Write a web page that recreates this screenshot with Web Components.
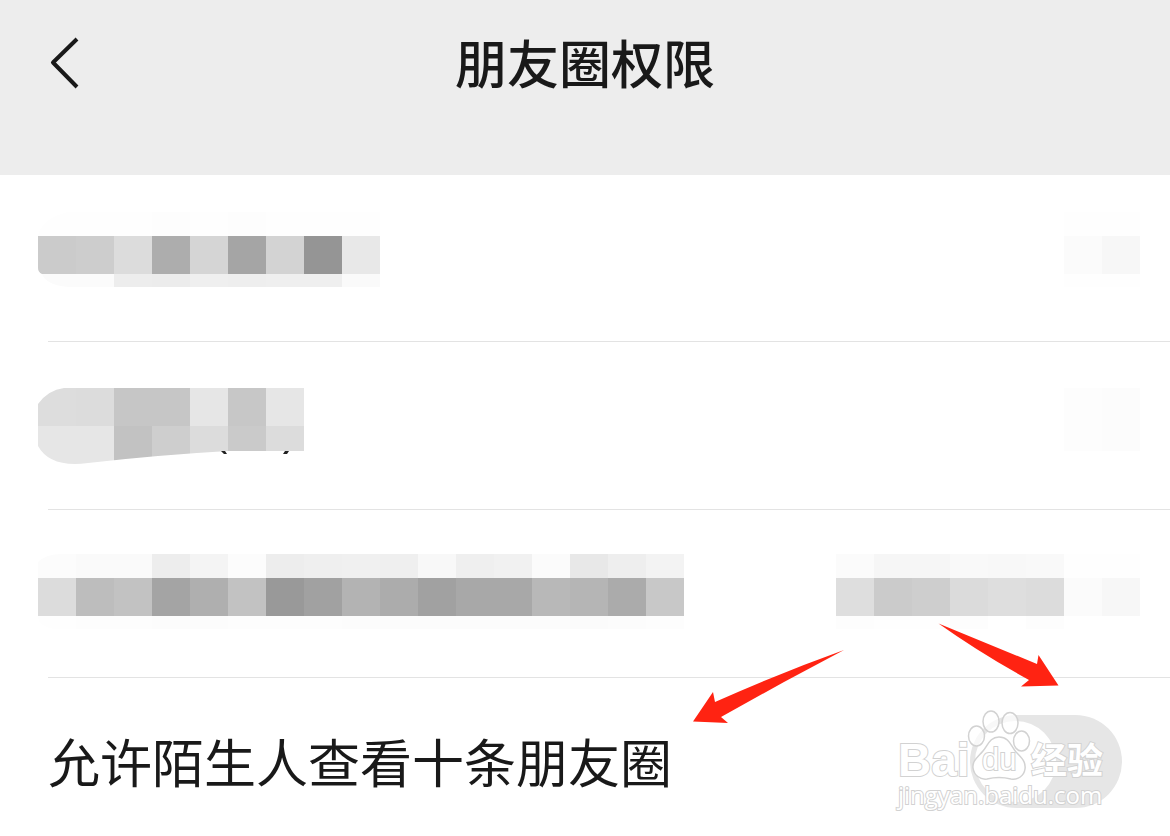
<!DOCTYPE html>
<html lang="zh-CN">
<head>
<meta charset="utf-8">
<meta name="viewport" content="width=device-width, initial-scale=1">
<title>朋友圈权限</title>
<style>
  body { margin: 0; background: #fff; color: #191919; font-family: "Liberation Sans", "Noto Sans CJK SC", sans-serif; }
</style>
</head>
<body>
<privacy-page>
  <nav-header slot="header">朋友圈权限</nav-header>
  <setting-row>
    <pixel-mosaic heights="24 38 13" corner="M30 0H342V75H30Q8 73 4 62Q0 60 0 56V24Q4 6 30 0Z"
      tiles="fe fe fe fd fe fd fe fe fe/cb cd dc ad d5 a5 d3 95 e8/fb fb ed ec ef ee ef ef fa"></pixel-mosaic>
    <pixel-mosaic slot="end" heights="24 38 13" tiles="fe fe/fb f7/fe fe"></pixel-mosaic>
  </setting-row>
  <setting-row>
    <pixel-mosaic heights="9 38 38" corner="M0 25Q10 11 26 9H266V72H190Q120 76 50 84Q12 89 0 67Z" specks
      tiles="ff ff ff ff ff ff ff/dd dc c6 c6 e6 c7 e6/e6 e6 c2 ce dc ca dc"></pixel-mosaic>
    <pixel-mosaic slot="end" heights="9 63" tiles="ff ff/fd fc"></pixel-mosaic>
  </setting-row>
  <setting-row>
    <pixel-mosaic heights="7 24 38 13" corner="M24 7H646V82H16Q0 79 0 69V15Q8 7 24 7Z"
      tiles="ff ff ff ff ff ff ff ff ff ff ff ff ff ff ff ff ff/fc fa fa ed f4 fc ed ef f0 ef f8 ef f1 fb e8 ee f3/dc bd c2 a4 af c2 99 a1 b3 ac a1 a8 a8 b8 b5 ab c8/fe fd fd fc fc fd fd fd fc fc fc fc fc fc fb fc fd"></pixel-mosaic>
    <pixel-mosaic slot="end" heights="7 24 38 13"
      tiles="ff ff ff ff ff ff ff ff/fb f6 f6 f9 f8 f9 fe fe/de cb ce db de dc fb f7/fd fe fe fd ff fd ff ff"></pixel-mosaic>
  </setting-row>
  <setting-row last>
    <label for="stranger" slot="label">允许陌生人查看十条朋友圈</label>
    <toggle-switch id="stranger" slot="end" label="允许陌生人查看十条朋友圈"></toggle-switch>
  </setting-row>
  <pointer-arrows slot="overlay"></pointer-arrows>
  <site-watermark slot="overlay"></site-watermark>
</privacy-page>

<script>
const define = (name, html, setup, statics = {}) => {
  const template = document.createElement('template');
  template.innerHTML = html;
  const element = class extends HTMLElement {
    constructor() {
      super();
      this.attachShadow({ mode: 'open' }).append(template.content.cloneNode(true));
    }
    connectedCallback() { if (setup) setup(this, this.shadowRoot); }
  };
  Object.assign(element, statics);
  customElements.define(name, element);
};

define('privacy-page', `
  <style>
    :host { display: block; }
    main { position: relative; }
  </style>
  <slot name="header"></slot>
  <main><slot></slot><slot name="overlay"></slot></main>`);

define('nav-header', `
  <style>
    :host { display: block; background: #ededed; padding-bottom: 49px; }
    header { display: grid; grid-template-columns: 1fr auto 1fr; align-items: center; height: 126px; }
    button { justify-self: start; display: flex; margin-left: 48px; padding: 0; border: 0; background: none; color: inherit; }
    h1 { margin: 0; padding-top: 6px; font-size: 52px; line-height: 76px; font-weight: 500; }
  </style>
  <header>
    <button type="button" aria-label="返回">
      <svg width="32" height="52" viewBox="0 0 32 52" fill="none" stroke="currentColor" stroke-width="4"><path d="M29 2L5 25.500L29 50" stroke-linejoin="round"/></svg>
    </button>
    <h1><slot></slot></h1>
  </header>`);

define('setting-row', `
  <style>
    :host { display: flex; justify-content: space-between; align-items: flex-start; box-sizing: border-box;
      height: 168px; margin-left: 48px; padding: 37px 30px 0 0; border-bottom: 1px solid #e3e3e3; }
    :host(:first-of-type) { height: 167px; }
    :host([last]) { height: auto; padding: 37px 48px 21px 0; border: 0; }
    .bleed { display: flex; margin-left: -10px; }
    ::slotted(label) { font-size: 52px; line-height: 100px; }
  </style>
  <slot name="label"></slot><div class="bleed"><slot></slot></div>
  <slot name="end"></slot>`);

define('pixel-mosaic', `
  <style>
    :host { display: block; }
    svg { display: block; }
  </style>
  <svg shape-rendering="crispEdges" aria-hidden="true"></svg>`, (host, root) => {
  const size = 38;
  const heights = host.getAttribute('heights').split(' ').map(Number);
  const rows = host.getAttribute('tiles').split('/').map(r => r.split(' '));
  const total = heights.reduce((a, b) => a + b, 0);
  let y = 0, out = '';
  rows.forEach((row, i) => {
    row.forEach((g, x) => out += `<rect x="${x * size}" y="${y}" width="${size}" height="${heights[i]}" fill="#${g}${g}${g}"/>`);
    y += heights[i];
  });
  const svg = root.querySelector('svg');
  svg.setAttribute('width', rows[0].length * size);
  svg.setAttribute('height', total);
  svg.innerHTML = `<g>${out}</g>`;
  const corner = host.getAttribute('corner');
  if (corner) svg.firstChild.style.clipPath = `path("${corner}")`;
  if (host.hasAttribute('specks'))
    svg.innerHTML += '<path d="M183 72H187L189 75H186ZM247 72H251L249 75H245Z" fill="#222" shape-rendering="auto"/>';
});

define('toggle-switch', `
  <style>
    :host { display: block; }
    input { appearance: none; display: flex; align-items: center; box-sizing: border-box; width: 152px; height: 93px;
      margin: 0; padding: 0 5px; border-radius: 47px; background: #e6e6e6; }
    input::before { content: ""; width: 81px; height: 81px; border-radius: 50%; background: #fff; }
    input:checked { justify-content: flex-end; background: #07c160; }
  </style>
  <input type="checkbox" role="switch">`, (host, root) => {
  const input = root.querySelector('input');
  input.setAttribute('aria-label', host.getAttribute('label'));
  const label = host.parentNode.querySelector(`label[for="${host.id}"]`);
  if (label) label.addEventListener('click', () => input.click());
});

define('pointer-arrows', `
  <style>
    :host { position: absolute; right: 90px; bottom: 106px; pointer-events: none; }
    svg { display: block; }
  </style>
  <svg width="400" height="115" viewBox="0 0 400 115" fill="#ff2312" aria-hidden="true">
    <path d="M164 35Q100 58 35 87L33 77L13 106.500L48 108L41 102L104 67Z"/>
    <path d="M258.500 8.500L357 49L358.500 40L378.500 70.500L341 71.500L349 65Q300 38 258.500 8.500Z"/>
  </svg>`);

define('site-watermark', `
  <style>
    :host { position: absolute; right: 30px; bottom: 16px; pointer-events: none; }
    svg { display: block; }
    text { fill: #fff; stroke: #d2d2d2; stroke-width: 2px; paint-order: stroke; font-weight: 700; }
    .brand { font-family: "Liberation Sans", sans-serif; font-size: 46px; }
    .du { font-family: "Liberation Sans", sans-serif; font-size: 31px; font-weight: 400; }
    .cjk { font-family: "Noto Sans CJK SC", sans-serif; font-size: 36px; }
    .url { font-family: "Open Sans", sans-serif; font-size: 24px; font-weight: 400; }
  </style>
  <svg width="260" height="120" viewBox="0 0 260 120">
    <g fill="#fff" fill-opacity=".7" stroke="#d2d2d2" stroke-width="1.500">
      <ellipse cx="96.500" cy="36" rx="8" ry="10"/>
      <ellipse cx="111" cy="21.500" rx="8" ry="10.500"/>
      <ellipse cx="130" cy="23" rx="8" ry="10.500"/>
      <ellipse cx="141.500" cy="41" rx="8" ry="10"/>
      <path fill-opacity="1" d="M119 37C129 37 131 46 136 52C142 58 146 62 145 69C144 76 138 80 131 79C123 77 115 77 107 79C100 80 94 75 93 68C92 61 98 57 103 51C108 45 110 37 119 37Z"/>
    </g>
    <text class="brand" x="18" y="76">Bai</text>
    <text class="du" x="102" y="70">du</text>
    <text class="cjk" x="151" y="74">经验</text>
    <text class="url" x="18" y="104">jingyan.baidu.com</text>
  </svg>`);
</script>
</body>
</html>
